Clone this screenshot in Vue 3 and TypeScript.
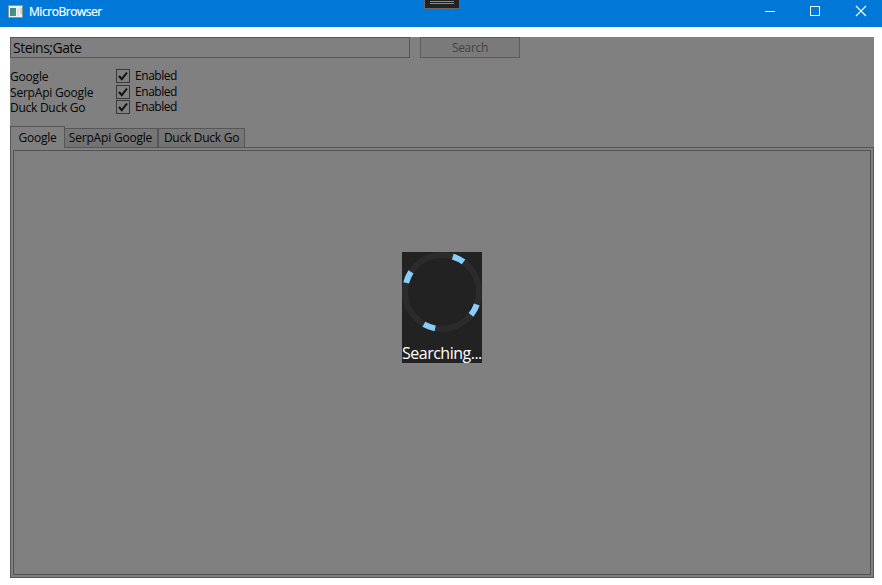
<script setup lang="ts">
import { ref } from 'vue'

const query = ref('Steins;Gate')
const engines = [
  { name: 'Google', width: 'w-google' },
  { name: 'SerpApi Google', width: 'w-serp' },
  { name: 'Duck Duck Go', width: 'w-duck' },
]
const active = ref(0)
const segments = [-63.7, 29, 110, 203.6]
</script>

<template>
  <div class="window">
    <header class="titlebar">
      <svg class="app-icon" width="16" height="14" viewBox="0 0 16 14">
        <defs>
          <linearGradient id="pane" x1="0" y1="0" x2="1" y2="1">
            <stop offset="0" stop-color="#3a7fa8" />
            <stop offset="1" stop-color="#4fa06a" />
          </linearGradient>
        </defs>
        <rect x="0.5" y="0.5" width="14" height="12" fill="#f0f2f3" stroke="#8b9298" />
        <rect x="2" y="3" width="6" height="8" fill="url(#pane)" />
        <rect x="9" y="3" width="2" height="8" fill="#dde5e8" />
        <rect x="12" y="3" width="2" height="6" fill="#b9dccb" />
      </svg>
      <span class="title">MicroBrowser</span>
      <div class="grip"><i></i><i></i></div>
      <div class="controls">
        <svg width="46" height="27" viewBox="0 0 46 27"><path d="M17 11.5h10" /></svg>
        <svg width="46" height="27" viewBox="0 0 46 27"><path d="M16.500 6.500h9v9h-9z" /></svg>
        <svg width="46" height="27" viewBox="0 0 46 27"><path d="M16 6l10 10M26 6L16 16" /></svg>
      </div>
    </header>

    <main class="content">
      <div class="search-row">
        <div class="query"><span>{{ query }}</span></div>
        <button class="search" disabled>Search</button>
      </div>

      <div class="engines">
        <div v-for="e in engines" :key="e.name" class="engine">
          <span class="name"><span :class="e.width">{{ e.name }}</span></span>
          <svg class="check" width="14" height="14" viewBox="0 0 14 14">
            <rect x="0.5" y="0.5" width="13" height="13" fill="none" stroke="#383838" />
            <path d="M3 7l2.800 3.200L11 3.500" fill="none" stroke="#111" stroke-width="2" />
          </svg>
          <span class="enabled">Enabled</span>
        </div>
      </div>

      <div class="tabs">
        <div
          v-for="(e, i) in engines"
          :key="e.name"
          class="tab"
          :class="[{ active: i === active }, 'tab-' + e.width]"
          @click="active = i"
        >
          <span :class="e.width">{{ e.name }}</span>
        </div>
      </div>
      <div class="panel"><div class="page"></div></div>

      <div class="busy">
        <svg width="80" height="80" viewBox="0 0 80 80">
          <circle cx="40" cy="40" r="37" fill="none" stroke="#2b2b2b" stroke-width="6" />
          <path
            v-for="a in segments"
            :key="a"
            d="M76.500 34A37 37 0 0 1 76.500 46"
            fill="none"
            stroke="#87cefa"
            stroke-width="6"
            :transform="`rotate(${a} 40 40)`"
          />
        </svg>
        <span>Searching...</span>
      </div>
    </main>
  </div>
</template>

<style>
body {
  margin: 0;
  background: #fff;
}
</style>

<style scoped>
.window {
  width: 882px;
  height: 585px;
  box-sizing: border-box;
  overflow: hidden;
  background: #fff;
  font-family: 'Open Sans', 'Noto Sans', sans-serif;
  font-size: 12px;
  line-height: 16px;
  color: #050505;
  white-space: nowrap;
}
.titlebar {
  position: relative;
  display: flex;
  height: 27px;
  background: #0078d7;
  color: #fff;
}
.app-icon {
  margin: 5px 5px 0 8px;
}
.title {
  margin-top: 4px;
  letter-spacing: -0.45px;
  -webkit-text-stroke: 0.2px #fff;
}
.grip {
  position: absolute;
  left: 424px;
  top: 0;
  width: 36px;
  height: 9px;
  box-sizing: border-box;
  padding: 1px 5px 0;
  border: 1px solid #686868;
  border-top: 0;
  background: #222;
}
.grip i {
  display: block;
  height: 1px;
  margin-bottom: 1px;
  background: #888;
}
.controls {
  display: flex;
  margin-left: auto;
  margin-right: -4px;
}
.controls path {
  fill: none;
  stroke: #fff;
  stroke-width: 1;
}
.controls svg:last-child path {
  stroke-width: 1.2;
}
.content {
  position: relative;
  display: flex;
  flex-direction: column;
  width: 864px;
  height: 541px;
  margin: 10px 0 0 10px;
  background: #808080;
}
.search-row {
  display: flex;
  gap: 10px;
  height: 21px;
}
.query {
  width: 400px;
  box-sizing: border-box;
  border: 1px solid #555759;
  padding-left: 2px;
  font-size: 14px;
  line-height: 20px;
  letter-spacing: -0.5px;
}
.search {
  width: 100px;
  box-sizing: border-box;
  padding: 0;
  border: 1px solid #5a5c5c;
  background: #7a7a7a;
  color: #424242;
  font: inherit;
  line-height: 19px;
  letter-spacing: -0.3px;
}
.engines {
  margin-top: 10px;
  height: 58px;
}
.engine {
  display: flex;
  height: 15.500px;
  align-items: flex-start;
}
.name {
  width: 106px;
  margin-top: 1px;
}
.check {
  margin: 1px 5px 0 0;
}
.enabled {
  letter-spacing: -0.45px;
}
.w-google {
  letter-spacing: -0.2px;
}
.w-serp {
  letter-spacing: -0.2px;
}
.w-duck {
  letter-spacing: -0.27px;
}
.tabs {
  display: flex;
  align-items: flex-end;
  height: 22px;
  margin-bottom: -1px;
}
.tab {
  height: 20px;
  box-sizing: border-box;
  border: 1px solid #565656;
  border-left-width: 0;
  background: linear-gradient(#787878, #727272);
  line-height: 18px;
  text-align: center;
}
.tab.active {
  position: relative;
  height: 22px;
  border-left-width: 1px;
  border-bottom: 0;
  background: #808080;
  line-height: 21px;
}
.tab-w-google {
  width: 55px;
}
.tab-w-serp {
  width: 93px;
}
.tab-w-serp span {
  margin-right: 1px;
}
.tab-w-duck {
  width: 87px;
  border-left-width: 1px;
}
.panel {
  flex: 1;
  display: flex;
  box-sizing: border-box;
  padding: 2px;
  border: 1px solid #565656;
}
.page {
  flex: 1;
  border: 1px solid #505254;
}
.busy {
  position: absolute;
  left: 392px;
  top: 215px;
  width: 80px;
  height: 111px;
  background: #222;
  color: #fff;
  font-size: 16px;
}
.busy svg {
  display: block;
}
.busy span {
  display: block;
  margin-top: 11px;
  line-height: 20px;
  letter-spacing: -0.5px;
}
</style>
